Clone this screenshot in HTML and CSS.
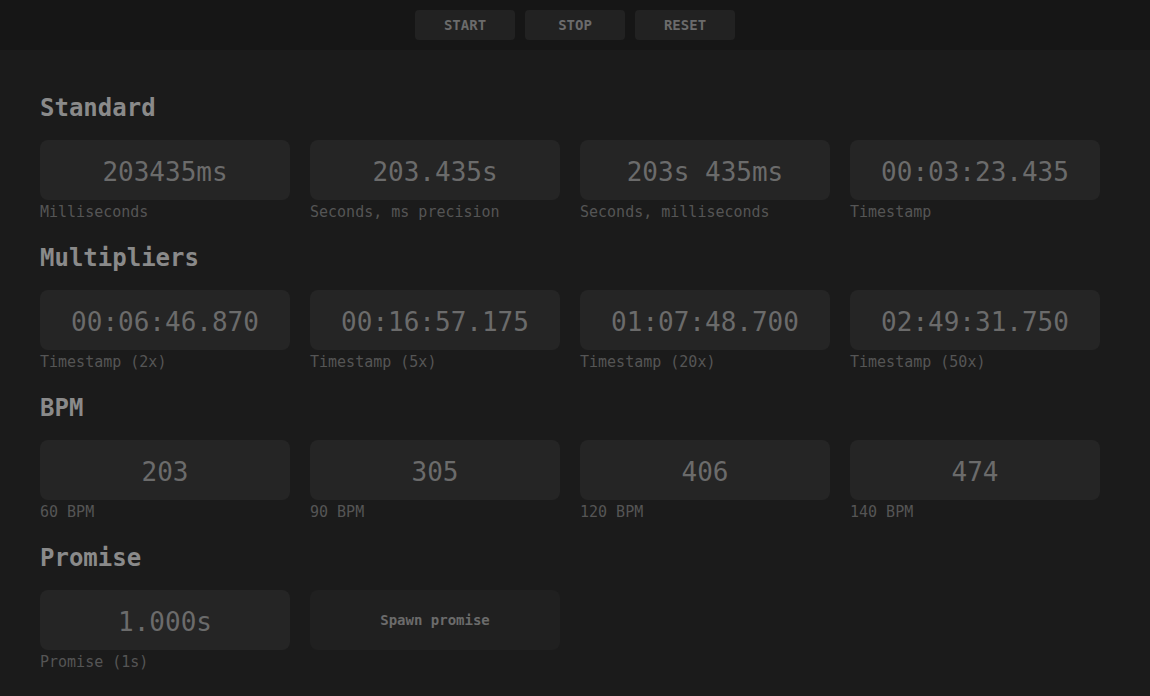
FILE: index.html
```html
<!DOCTYPE html>
<html>
<head>
<meta charset="utf-8">
<link rel="stylesheet" href="styles.css">
</head>
<body>
<header class="topbar">
  <button class="ctrl">START</button>
  <button class="ctrl">STOP</button>
  <button class="ctrl">RESET</button>
</header>
<main class="content">
  <section class="group">
    <h2 class="group-title">Standard</h2>
    <div class="grid">
      <div class="item"><div class="value">203435ms</div><div class="label">Milliseconds</div></div>
      <div class="item"><div class="value">203.435s</div><div class="label">Seconds, ms precision</div></div>
      <div class="item"><div class="value">203s 435ms</div><div class="label">Seconds, milliseconds</div></div>
      <div class="item"><div class="value">00:03:23.435</div><div class="label">Timestamp</div></div>
    </div>
  </section>
  <section class="group">
    <h2 class="group-title">Multipliers</h2>
    <div class="grid">
      <div class="item"><div class="value">00:06:46.870</div><div class="label">Timestamp (2x)</div></div>
      <div class="item"><div class="value">00:16:57.175</div><div class="label">Timestamp (5x)</div></div>
      <div class="item"><div class="value">01:07:48.700</div><div class="label">Timestamp (20x)</div></div>
      <div class="item"><div class="value">02:49:31.750</div><div class="label">Timestamp (50x)</div></div>
    </div>
  </section>
  <section class="group">
    <h2 class="group-title">BPM</h2>
    <div class="grid">
      <div class="item"><div class="value">203</div><div class="label">60 BPM</div></div>
      <div class="item"><div class="value">305</div><div class="label">90 BPM</div></div>
      <div class="item"><div class="value">406</div><div class="label">120 BPM</div></div>
      <div class="item"><div class="value">474</div><div class="label">140 BPM</div></div>
    </div>
  </section>
  <section class="group">
    <h2 class="group-title">Promise</h2>
    <div class="grid">
      <div class="item"><div class="value">1.000s</div><div class="label">Promise (1s)</div></div>
      <div class="item"><button class="spawn">Spawn promise</button></div>
    </div>
  </section>
</main>
</body>
</html>
```
FILE: styles.css
```css
* { box-sizing: border-box; }
html, body {
  margin: 0;
  padding: 0;
  background: #1b1b1b;
  font-family: "DejaVu Sans Mono", monospace;
  height: 100%;
  overflow: hidden;
}
.topbar {
  height: 50px;
  background: #161616;
  display: flex;
  justify-content: center;
  align-items: center;
  gap: 10px;
}
.ctrl {
  width: 100px;
  height: 30px;
  border: none;
  border-radius: 4px;
  background: #222222;
  color: #6b6b6b;
  font-family: "DejaVu Sans Mono", monospace;
  font-weight: bold;
  font-size: 14px;
  padding: 0;
}
.content {
  padding: 40px 40px 0;
}
.group {
  margin-bottom: 18px;
}
.group-title {
  margin: 0 0 16px;
  padding-top: 2px;
  font-size: 24px;
  line-height: 32px;
  font-weight: bold;
  color: #8a8a8a;
}
.grid {
  display: grid;
  grid-template-columns: repeat(4, 250px);
  gap: 20px;
}
.item {
  display: flex;
  flex-direction: column;
}
.value {
  height: 60px;
  padding-top: 4px;
  border-radius: 8px;
  background: #252525;
  color: #6b6b6b;
  font-size: 26px;
  display: flex;
  align-items: center;
  justify-content: center;
}
.label {
  font-size: 15px;
  line-height: 20px;
  padding-top: 2px;
  color: #555555;
}
.spawn {
  height: 60px;
  border: none;
  border-radius: 8px;
  background: #202020;
  color: #6b6b6b;
  font-family: "DejaVu Sans Mono", monospace;
  font-weight: bold;
  font-size: 14px;
  padding: 0;
}
```
